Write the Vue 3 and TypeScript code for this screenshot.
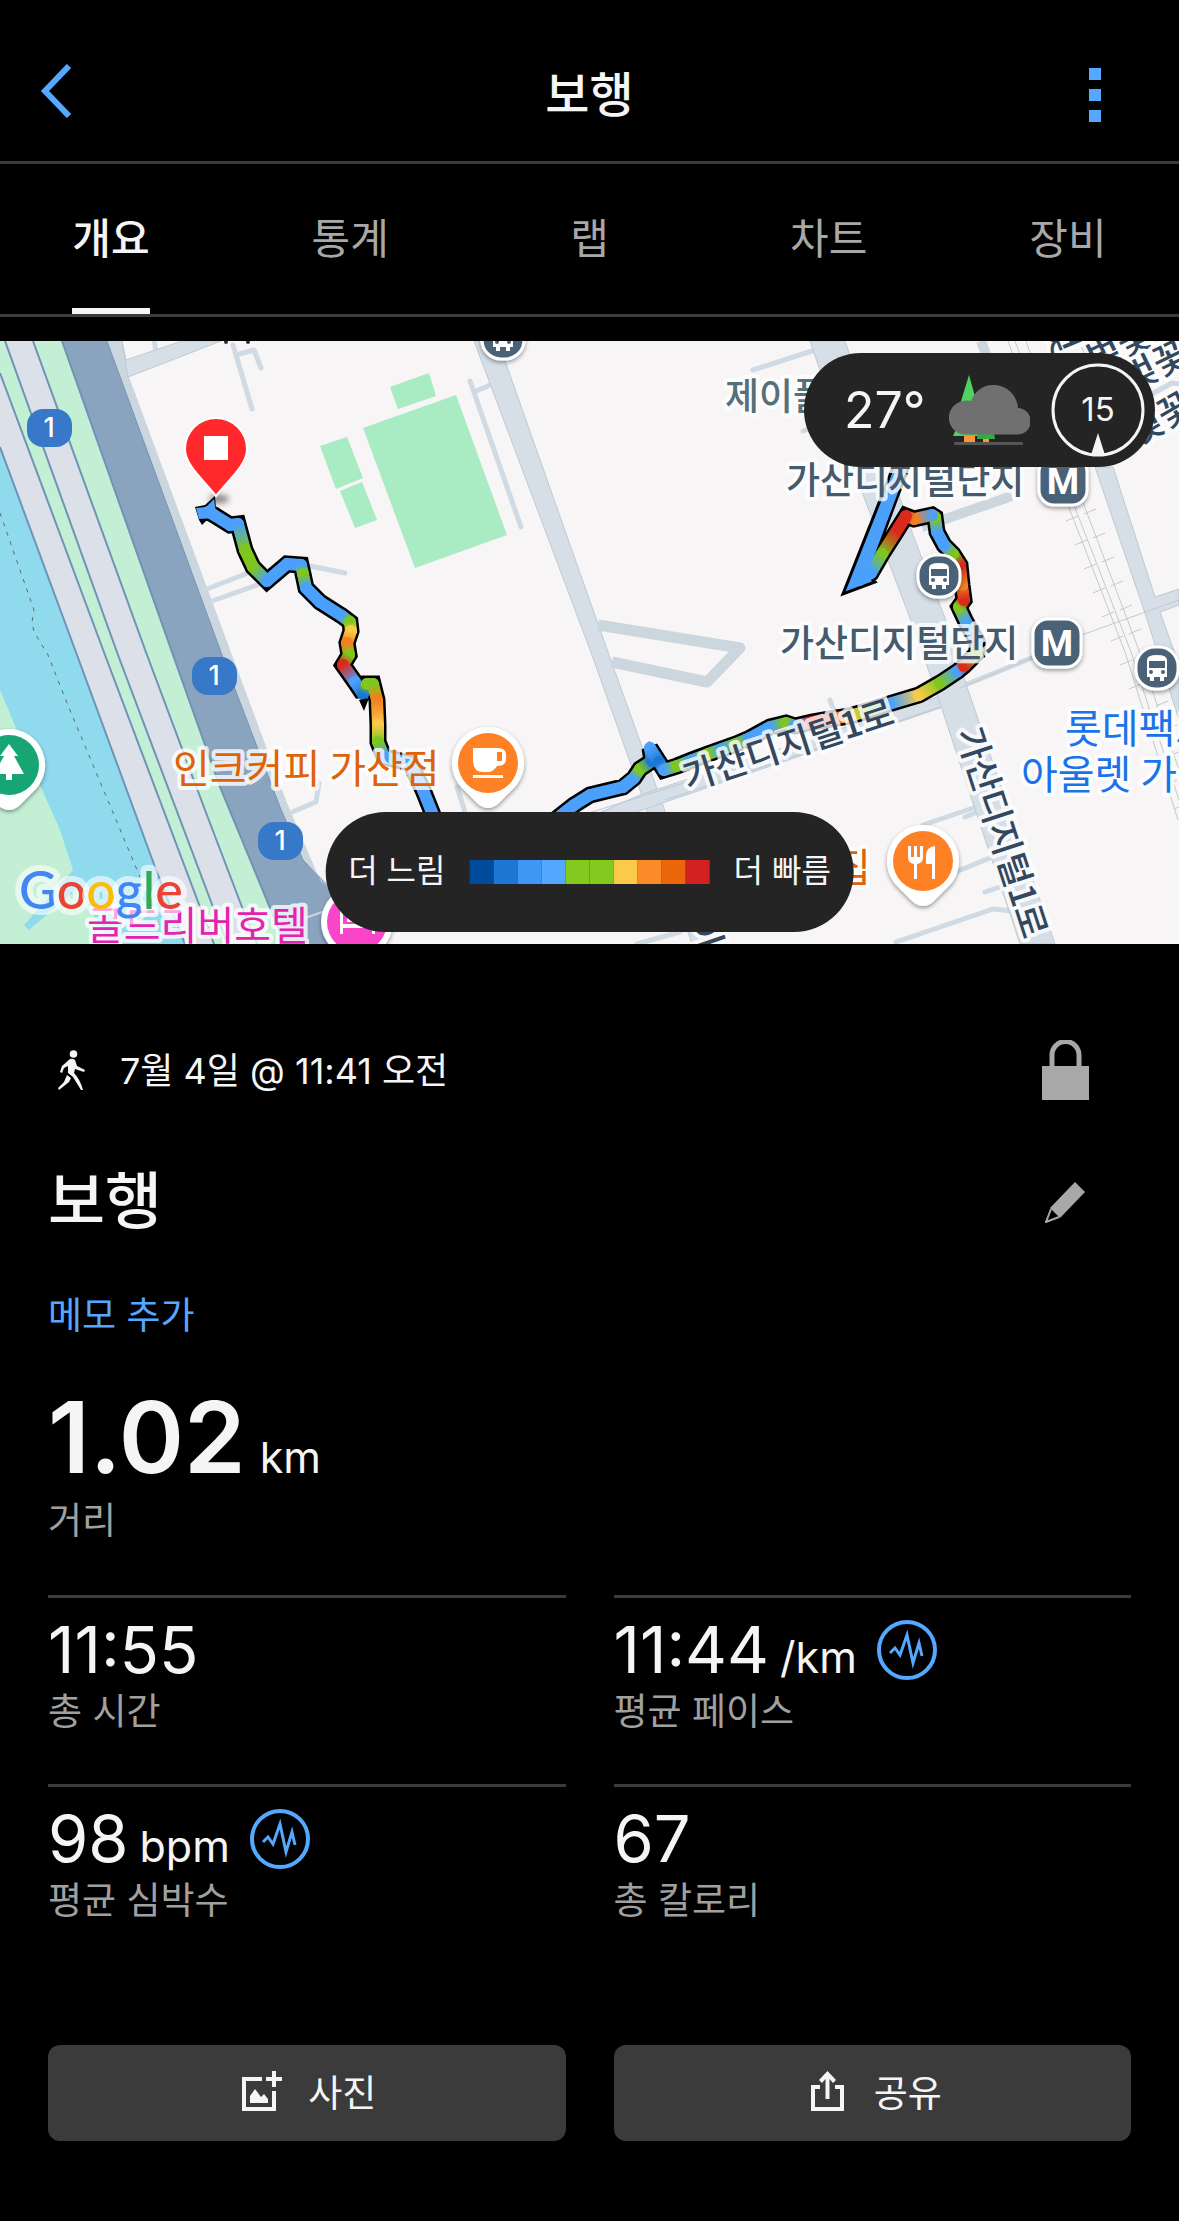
<script setup lang="ts">
import { ref } from 'vue'

interface Tab { id: string; label: string }
interface Stat { value: string; unit?: string; label: string; chart?: boolean }
type TrackPoint = [number, number, string]
interface Segment { id: string; x1: number; y1: number; x2: number; y2: number; from: string; to: string }

const tabs: Tab[] = [
  { id: 'overview', label: '개요' },
  { id: 'stats', label: '통계' },
  { id: 'laps', label: '랩' },
  { id: 'charts', label: '차트' },
  { id: 'gear', label: '장비' },
]
const activeTab = ref('overview')

const stats: Stat[] = [
  { value: '11:55', label: '총 시간' },
  { value: '11:44', unit: '/km', label: '평균 페이스', chart: true },
  { value: '98', unit: 'bpm', label: '평균 심박수', chart: true },
  { value: '67', label: '총 칼로리' },
]

const paceScale = ['#004a9c', '#1c76d3', '#3e97f5', '#55a8ff', '#83c91e', '#83c91e', '#fbca4b', '#fb8b27', '#ea670c', '#d32121']

const B = '#4aa0fa'
const D = '#1c76d3'
const G = '#7fc61e'
const Y = '#fbc94a'
const O = '#f08020'
const R = '#d92a1c'

const westTrack: TrackPoint[] = [
  [208, 512, B], [214, 515, B], [230, 525, B], [238, 524, B], [245, 550, G], [253, 567, G],
  [267, 581, B], [287, 564, B], [301, 565, B], [303, 574, G], [306, 588, B], [320, 602, B], [342, 616, B],
  [350, 622, G], [351, 631, Y], [347, 643, O], [349, 655, G], [343, 665, R], [355, 682, B], [363, 694, D],
  [367, 684, G], [373, 684, G], [377, 700, O], [378, 725, Y], [378, 742, G], [384, 757, B], [410, 763, B],
  [423, 790, B], [433, 815, B], [450, 850, B],
]
const eastTrack: TrackPoint[] = [
  [555, 820, B], [574, 805, B], [590, 795, B], [623, 787, B], [634, 778, B], [640, 769, G], [652, 761, D],
  [650, 748, B], [659, 762, D], [664, 770, B], [677, 766, G], [692, 760, B], [708, 754, G], [722, 749, B],
  [736, 744, G], [750, 738, B], [770, 727, B], [786, 723, G], [795, 726, B], [812, 722, R], [830, 719, R],
  [850, 716, Y], [870, 710, G], [892, 703, B], [919, 695, Y], [940, 683, G], [958, 671, B], [964, 666, R],
  [977, 653, G], [977, 641, B], [966, 622, B], [959, 607, G], [964, 600, R], [962, 585, O], [960, 565, R],
  [953, 554, G], [944, 545, B], [937, 532, B], [935, 517, G], [932, 515, B], [914, 519, O], [906, 516, R],
  [896, 532, R], [882, 554, G], [871, 573, B], [859, 580, B], [870, 550, B], [900, 470, B], [910, 445, B],
]

const segmentsOf = (points: TrackPoint[], prefix: string): Segment[] =>
  points.slice(1).map((p, i) => {
    const q = points[i]
    return { id: `${prefix}-${i}`, x1: q[0], y1: q[1], x2: p[0], y2: p[1], from: q[2], to: p[2] }
  })
const outlineOf = (points: TrackPoint[]) => points.map((p) => `${p[0]},${p[1]}`).join(' ')

const segments = [...segmentsOf(westTrack, 'w'), ...segmentsOf(eastTrack, 'e')]
const outlines = [outlineOf(westTrack), outlineOf(eastTrack)]

const shields = [[50, 428], [215, 676], [281, 841]]
const busStops = [[503, 338], [939, 576], [1157, 668]]
const metros = [[1063, 481], [1057, 643]]
const railTicks = Array.from({ length: 16 }, (_, i) => [1066 + i * 9, 515 + i * 24])
</script>

<template>
  <div class="screen">
    <header class="topbar">
      <button class="icon-button back" type="button" aria-label="뒤로">
        <svg width="32" height="54" viewBox="0 0 32 54"><path d="M29 2 5 27 29 52" fill="none" stroke="currentColor" stroke-width="6" /></svg>
      </button>
      <h1>보행</h1>
      <button class="icon-button more" type="button" aria-label="더 보기">
        <svg width="12" height="54" viewBox="0 0 12 54" fill="currentColor"><path d="M0 0h12v12H0zM0 21h12v12H0zM0 42h12v12H0z" /></svg>
      </button>
    </header>

    <nav class="tabs">
      <button
        v-for="tab in tabs"
        :key="tab.id"
        type="button"
        class="tab"
        :class="{ active: tab.id === activeTab }"
        @click="activeTab = tab.id"
      >{{ tab.label }}</button>
    </nav>

    <section class="map">
      <svg class="map-canvas" viewBox="0 341 1179 603">
        <defs>
          <linearGradient
            v-for="s in segments" :id="s.id" :key="s.id" gradientUnits="userSpaceOnUse"
            :x1="s.x1" :y1="s.y1" :x2="s.x2" :y2="s.y2"
          >
            <stop offset="0" :stop-color="s.from" />
            <stop offset="1" :stop-color="s.to" />
          </linearGradient>
          <filter id="shade" x="-30%" y="-30%" width="160%" height="170%">
            <feDropShadow dx="0" dy="2" stdDeviation="2" flood-color="#000" flood-opacity="0.4" />
          </filter>
          <filter id="soft" x="-50%" y="-100%" width="200%" height="300%"><feGaussianBlur stdDeviation="3" /></filter>
        </defs>

        <rect y="341" width="1179" height="603" fill="#f7f5f6" />

        <!-- river and expressway -->
        <path d="M0 341V944H185L155 867 77 655 0 447z" fill="#90daee" />
        <path d="M0 690 16 728 40 785 60 830 73 870 24 925 29 930 78 888 110 944H0z" fill="#c3f0d5" />
        <path d="M0 341H107L222 655 280 807 303 860 335 890V944H185L155 867 77 655 0 447z" fill="#dce0e8" />
        <path d="M0 341H5L118 655 213 907 228 944H212L200 907 105 655 0 373z" fill="#c3f0d5" />
        <path d="M33 341H62L173 655 220 787 268 903 285 944H257L242 907 205 810 147 655z" fill="#c3f0d5" />
        <path d="M62 341H107L222 655 280 807 303 860 335 894V944H285L268 903 220 787 173 655z" fill="#8aa4c0" />
        <path d="M107 341H122L129 377 232 655 287 803 320 880 336 895 303 860 280 807 222 655z" fill="#ccd6de" />
        <g fill="none" stroke="#6f93b6" stroke-width="2">
          <path d="M0 447 77 655 155 867 185 944M0 373 105 655 200 907 214 944M5 341 118 655 213 907 228 944" />
          <path d="M33 341 147 655 205 810 242 907 257 944M62 341 173 655 220 787 268 903 285 944" />
          <path d="M107 341 222 655 280 807 303 860 336 895" stroke-width="1" />
        </g>
        <path d="M305 918 328 910" stroke="#ccd6de" stroke-width="2" />
        <path d="M0 513 34 610 32 622 34 632 48 655 67 703 140 877 165 940" fill="none" stroke="#666" stroke-width="1" stroke-dasharray="4 6" />

        <!-- parks -->
        <g fill="#a9ebc3">
          <path d="M390 387 429 373 436 396 398 409z" />
          <path d="M363 428 456 395 507 535 415 568z" />
          <path d="M320 446 347 437 363 478 336 489z" />
          <path d="M340 491 362 482 377 520 355 528z" />
        </g>

        <!-- side streets -->
        <g fill="none" stroke="#cfdae4" stroke-width="5" stroke-linecap="round" stroke-linejoin="round">
          <path d="M154 341 156 351M233 345 236 355 252 409M236 355 254 350 261 368" />
          <path d="M207 589 248 573M212 601 257 585M310 566 345 573" />
          <path d="M470 381 521 527M476 391 495 383M753 370 812 351M803 431 820 425" />
          <path d="M457 787 465 812M292 812 316 802 319 783M830 700 838 722M846 712 856 735" />
          <path d="M923 825 973 808M965 817 975 813M958 871 990 858M985 892 1000 887M896 942 993 909 1012 911" />
          <path d="M637 944 680 932M965 685 1034 657M1150 395 1172 383 1179 384" />
        </g>

        <!-- main streets -->
        <g stroke="#bccad2" stroke-width="1">
          <path d="M122 341 126 360 182 341H221L128 377z" fill="#d6dfe7" />
          <path d="M474 341H498L609 655 655 783 712 944H692L640 790 592 655z" fill="#d6dfe7" />
          <path d="M555 832 640 795 940 696 946 706 560 838z" fill="#d6dfe7" />
          <path d="M810 341H845L913 535 945 618 967 687 1055 944H1020L973 803 940 703 910 618 862 492z" fill="#d6dfe7" />
          <path d="M1095 467H1113L1155 597 1179 589V605L1160 612 1179 665V720L1145 613z" fill="#d6dfe7" />
          <path d="M560 822 700 778M665 800 940 707" fill="none" />
        </g>
        <path d="M598 625 740 648 707 682 612 662" fill="none" stroke="#ccd6de" stroke-width="11" stroke-linejoin="round" />
        <path d="M922 527 1012 496M981 341 988 360M1083 352 1102 343" fill="none" stroke="#ccd6de" stroke-width="10" />

        <!-- railway -->
        <g fill="none" stroke="#c4c9ce" stroke-width="1">
          <path d="M1008 341 1068 505 1125 652 1178 820M1015 341 1074 505 1131 652 1179 800M1026 341 1084 505 1137 645 1179 770" />
          <path d="M1076 637 1179 600M960 688 1034 657" />
          <path v-for="t in railTicks" :key="t[0]" :d="`M${t[0]} ${t[1] + 6}l12-5m6 -2l12-5`" />
        </g>

        <!-- recorded track -->
        <ellipse cx="219" cy="499" rx="10" ry="4" fill="#000" opacity="0.5" filter="url(#soft)" />
        <polyline v-for="(o, i) in outlines" :key="i" :points="o" fill="none" stroke="#000" stroke-width="17" stroke-linejoin="miter" stroke-miterlimit="2" />
        <path d="M195 507 205 505 215 496 217 520 206 521 202 525 199 520z" fill="#000" />
        <path d="M892 470 843 594 875 582 865 573 908 466z" :fill="B" stroke="#000" stroke-width="3" />
        <path d="M649 741 645 760 667 765z" fill="#000" />
        <line
          v-for="s in segments" :key="`line-${s.id}`" :x1="s.x1" :y1="s.y1" :x2="s.x2" :y2="s.y2"
          :stroke="`url(#${s.id})`" stroke-width="12" stroke-linecap="round"
        />
        <path d="M196 508 206 507 214 499 217 518 199 519z" :fill="B" />
        <path d="M359 700 369 698 364 711z" fill="#000" />

        <!-- route shields -->
        <g v-for="s in shields" :key="s[1]">
          <rect :x="s[0] - 23" :y="s[1] - 19" width="45" height="38" rx="16" fill="#3878c8" />
          <text :x="s[0] - 1" :y="s[1] + 9" class="shield">1</text>
        </g>

        <!-- place labels -->
        <g class="label slate">
          <text x="725" y="410" fill="#56707a">제이플</text>
          <text x="786" y="494">가산디지털단지</text>
          <text x="780" y="657">가산디지털단지</text>
        </g>
        <g class="label street">
          <text transform="translate(688 791) rotate(-18)">가산디지털1로</text>
          <text transform="translate(956 732) rotate(72)">가산디지털1로</text>
          <text transform="translate(1095 372) rotate(-26)">벚꽃로</text>
          <text transform="translate(1131 392) rotate(-26)">벚꽃로</text>
          <text transform="translate(1138 446) rotate(-30)">벚꽃로</text>
          <text transform="translate(1043 326) rotate(68)">벚</text>
          <text transform="translate(688 921) rotate(71)">이</text>
        </g>
        <g class="poi">
          <text x="173" y="783" fill="#dd6208">인크커피 가산점</text>
          <text x="834" y="882" fill="#dd6208">집</text>
          <text x="1065" y="743" fill="#1a73e8">롯데팩토리</text>
          <text x="1021" y="789" fill="#1a73e8">아울렛 가산점</text>
          <text x="87" y="940" fill="#e523b0">골드리버호텔</text>
        </g>

        <!-- transit markers -->
        <g v-for="b in busStops" :key="b[0]" :transform="`translate(${b[0]} ${b[1]})`">
          <rect x="-21" y="-21" width="42" height="42" rx="19" fill="#4a6278" stroke="#fff" stroke-width="3" filter="url(#shade)" />
          <path d="M-10-8q0-5 10-5t10 5V9H7v4H3V9H-3v4H-7V9h-3z" fill="#fff" />
          <path d="M-8-7H8V0H-8z" fill="#4a6278" /><circle cx="-6" cy="4" r="2" fill="#4a6278" /><circle cx="6" cy="4" r="2" fill="#4a6278" />
        </g>
        <g v-for="m in metros" :key="m[1]">
          <rect :x="m[0] - 24" :y="m[1] - 24" width="48" height="48" rx="15" fill="#4a6278" stroke="#fff" stroke-width="3" filter="url(#shade)" />
          <text :x="m[0]" :y="m[1] + 13" class="metro">M</text>
        </g>

        <!-- place pins -->
        <g transform="translate(488 763)">
          <path d="M0-36a36 36 0 0 1 26 61L10 41Q0 49-10 41L-26 25A36 36 0 0 1 0-36z" fill="#fff" filter="url(#shade)" />
          <circle r="30" fill="#ff8126" />
          <path d="M-15-15H10q8 0 8 7v4q0 7-9 7Q5 9 0 9H-5Q-15 9-15-3zM9-11V-2h5v-9zM-15 12H15v3H-15z" fill="#fff" fill-rule="evenodd" />
        </g>
        <g transform="translate(923 861)">
          <path d="M0-36a36 36 0 0 1 26 61L10 41Q0 49-10 41L-26 25A36 36 0 0 1 0-36z" fill="#fff" filter="url(#shade)" />
          <circle r="30" fill="#ff8126" />
          <path d="M-15-15h3v11h3v-11h3v11h3v-11h3v11q0 6-6 7v15h-3V3q-6-1-6-7zM12-15v33H9V3H3V-5Q3-14 12-15z" fill="#fff" />
        </g>
        <g transform="translate(9 765)">
          <path d="M0-36a36 36 0 0 1 26 61L10 41Q0 49-10 41L-26 25A36 36 0 0 1 0-36z" fill="#fff" filter="url(#shade)" />
          <circle r="30" fill="#17a673" />
          <path d="M0-21 9-9H5L15 9H3v6H-3V9H-15L-5-9H-9z" fill="#fff" />
        </g>
        <g transform="translate(357 922)">
          <circle r="36" fill="#fff" filter="url(#shade)" /><circle r="30" fill="#fb45c8" />
          <path d="M-17-11h3V2H15V-6h3V12H15V6H-14v6h-3zM-10-8H-2V0h-8z" fill="#fff" />
        </g>

        <!-- finish pin -->
        <path d="M216 496C205 481 185 466 185 449a31 31 0 0 1 62 0C247 466 227 481 216 496z" fill="#ff282b" stroke="#fff" stroke-width="2" />
        <rect x="204" y="436" width="24" height="24" fill="#fff" />
        <circle cx="226" cy="342" r="2" fill="#27324a" /><circle cx="248" cy="342" r="2" fill="#27324a" />

        <text x="19" y="909" class="google"><tspan fill="#4285f4">G</tspan><tspan fill="#ea4335">o</tspan><tspan fill="#fbbc05">o</tspan><tspan fill="#4285f4">g</tspan><tspan fill="#34a853">l</tspan><tspan fill="#ea4335">e</tspan></text>
      </svg>

      <div class="weather">
        <span class="temperature">27°</span>
        <svg width="84" height="70" viewBox="0 0 84 70">
          <path d="M23 0 36 46H9z" fill="#4fd264" /><path d="M11 52H40V61H7z" fill="#4fd264" />
          <path d="M32 58H48L49 64H31z" fill="#2fae45" />
          <path d="M18 61H29V67H18zM37 64H43V67H37z" fill="#ff9634" />
          <rect x="8" y="67" width="69" height="3" rx="1" fill="#555" />
          <path d="M17 59.500A17 17 0 0 1 17 26Q21 25 25 26C29 16 37 10 47 10C61 10 71 20 72 33A13 13 0 0 1 71 59.500z" fill="#707070" />
        </svg>
        <svg class="wind" width="94" height="94" viewBox="0 0 94 94">
          <circle cx="47" cy="47" r="45" fill="none" stroke="#f5f5f5" stroke-width="3" />
          <path d="M47 70 54 92Q47 94 40 92z" fill="#f5f5f5" />
          <text x="47" y="58">15</text>
        </svg>
      </div>

      <div class="legend">
        <span>더 느림</span>
        <div class="scale"><i v-for="(c, i) in paceScale" :key="i" :style="{ background: c }"></i></div>
        <span>더 빠름</span>
      </div>
    </section>

    <main class="details">
      <div class="row">
        <svg class="walker" width="28" height="40" viewBox="0 0 28 40" fill="#f5f5f5">
          <circle cx="15.500" cy="4" r="3.800" />
          <path d="M12 9Q15 8 17 10L19 16 27 20 26 22 17 19 16 23Q22 29 25 40H23L15 27 10 23 10 16 6 18 4 23 2 22 4 16z" />
          <path d="M9 25 13 28 11 32 1 40 0 38 6 32z" />
        </svg>
        <time class="date">7월 4일 @ 11:41 오전</time>
        <button class="icon-button action" type="button" aria-label="공개 범위">
          <svg width="47" height="60" viewBox="0 0 47 60"><path d="M10 28V15a13 13 0 0 1 27 0V28" fill="none" stroke="#a8a8a8" stroke-width="5" /><path d="M0 26H47V60H0z" fill="#a8a8a8" /></svg>
        </button>
      </div>
      <div class="row">
        <h2>보행</h2>
        <button class="icon-button action" type="button" aria-label="이름 편집">
          <svg width="40" height="41" viewBox="0 0 40 41"><path d="M30 0 40 10 15 36 5 26z" fill="#a8a8a8" /><path d="M6 27 1 40 14 35" fill="none" stroke="#a8a8a8" stroke-width="2" /></svg>
        </button>
      </div>
      <a class="memo" href="#memo">메모 추가</a>

      <div class="distance"><strong>1.02</strong><span class="unit">km</span></div>
      <div class="caption">거리</div>

      <div class="stats">
        <div v-for="s in stats" :key="s.label" class="stat">
          <div class="value">
            <span class="number">{{ s.value }}</span>
            <span v-if="s.unit" class="unit">{{ s.unit }}</span>
            <button v-if="s.chart" class="icon-button chart" type="button" :aria-label="`${s.label} 차트`">
              <svg width="60" height="60" viewBox="0 0 60 60" fill="none" stroke="currentColor">
                <circle cx="30" cy="30" r="28" stroke-width="4" />
                <path d="M13 33 18 28 23 35 30 15 36 43 42 23 45 36" stroke-width="3" stroke-miterlimit="8" />
              </svg>
            </button>
          </div>
          <div class="caption">{{ s.label }}</div>
        </div>
      </div>

      <div class="buttons">
        <button type="button">
          <svg width="40" height="40" viewBox="0 0 40 40" fill="#f5f5f5">
            <path d="M0 6H20V10H4V36H30V20H34V40H0z" /><path d="M30 0H34V6H40V10H34V16H30V10H24V6H30z" /><path d="M8 32V25L13 18 19 26 22 23 26 28V32z" />
          </svg>
          <span>사진</span>
        </button>
        <button type="button">
          <svg width="40" height="40" viewBox="0 0 40 40" fill="#f5f5f5">
            <path d="M3 14H12V18H7V36H32V18H27V14H36V40H3z" /><path d="M19.500 0 28 9 25 12 21.500 8V28H17.500V8L14 12 11 9z" />
          </svg>
          <span>공유</span>
        </button>
      </div>
    </main>
  </div>
</template>

<style>
body {
  background: #000;
}
</style>

<style scoped>
.screen {
  box-sizing: border-box;
  min-height: 100vh;
  background: #000;
  color: #f5f5f5;
  font-family: Inter, "Noto Sans CJK KR", sans-serif;
  font-size: 36px;
}
button {
  margin: 0;
  padding: 0;
  border: 0;
  background: none;
  color: inherit;
  font: inherit;
  cursor: pointer;
}
svg {
  display: block;
  flex: none;
}
.icon-button {
  display: flex;
  align-items: center;
  justify-content: center;
  color: #55a8ff;
}
.topbar {
  display: flex;
  align-items: center;
  justify-content: space-between;
  height: 133px;
  padding: 28px 12px 0;
  border-bottom: 3px solid #3b3b3b;
}
.topbar .icon-button {
  width: 88px;
  height: 90px;
}
.topbar .back {
  padding-bottom: 8px;
}
.topbar .more {
  width: 144px;
  margin-left: -56px;
}
h1 {
  margin: 0;
  font-size: 48px;
  font-weight: 500;
  line-height: 72px;
}
.tabs {
  display: flex;
  justify-content: space-between;
  height: 150px;
  padding: 0 72px;
  border-bottom: 3px solid #3b3b3b;
}
.tab {
  width: 78px;
  padding-bottom: 2px;
  border-bottom: 6px solid transparent;
  color: #a8a8a8;
  font-size: 42px;
  white-space: nowrap;
}
.tab.active {
  border-color: #f5f5f5;
  color: #f5f5f5;
  font-weight: 500;
}
.map {
  position: relative;
  margin-top: 24px;
  overflow: hidden;
}
.map-canvas {
  width: 100%;
  height: auto;
}
.label,
.poi {
  font-family: "Noto Sans CJK KR", sans-serif;
  font-size: 36px;
  font-weight: 500;
  paint-order: stroke;
  stroke: rgba(255, 255, 255, 0.8);
  stroke-width: 8px;
  stroke-linejoin: round;
}
.poi {
  font-size: 40px;
  font-weight: 400;
}
.slate {
  fill: #445a6e;
  font-size: 37px;
}
.street {
  fill: #33475e;
}
.shield {
  fill: #fff;
  font-size: 27px;
  font-weight: 500;
  text-anchor: middle;
}
.metro {
  fill: #fff;
  font-family: Roboto, sans-serif;
  font-size: 37px;
  font-weight: 700;
  text-anchor: middle;
}
.google {
  font-family: Lato, sans-serif;
  font-size: 52px;
  font-weight: 500;
  paint-order: stroke;
  stroke: rgba(255, 255, 255, 0.6);
  stroke-width: 12px;
  stroke-linejoin: round;
}
.weather {
  position: absolute;
  top: 12px;
  right: 24px;
  box-sizing: border-box;
  display: flex;
  align-items: center;
  justify-content: space-between;
  width: 351px;
  height: 114px;
  padding: 0 10px 0 40px;
  border-radius: 57px;
  background: #242424;
}
.temperature {
  font-size: 50px;
}
.wind text {
  fill: #f5f5f5;
  font-size: 33px;
  text-anchor: middle;
}
.legend {
  position: absolute;
  bottom: 12px;
  left: 50%;
  display: flex;
  align-items: center;
  gap: 24px;
  height: 120px;
  padding: 0 23px;
  border-radius: 60px;
  background: #242424;
  font-size: 32px;
  line-height: 48px;
  white-space: nowrap;
  transform: translateX(-50%);
}
.legend span {
  padding-bottom: 2px;
}
.scale {
  display: flex;
}
.scale i {
  width: 24px;
  height: 24px;
}
.details {
  padding: 60px 48px 80px;
}
.row {
  display: flex;
  align-items: center;
  height: 132px;
}
.walker {
  margin-left: 10px;
}
.date {
  margin-left: 34px;
  padding-bottom: 4px;
}
.action {
  width: 132px;
  height: 132px;
  margin-left: auto;
}
h2 {
  margin: 0;
  font-size: 62px;
  font-weight: 500;
  line-height: 84px;
}
.memo {
  display: block;
  width: max-content;
  margin-top: 24px;
  color: #55a8ff;
  font-size: 37px;
  line-height: 48px;
  text-decoration: none;
}
.distance {
  display: flex;
  align-items: baseline;
  gap: 14px;
  height: 120px;
  margin-top: 37px;
  line-height: 120px;
}
.distance strong {
  font-size: 99px;
  font-weight: 600;
}
.unit {
  font-size: 43px;
}
.caption {
  color: #a0a0a0;
  font-size: 37px;
  line-height: 48px;
}
.stats {
  display: grid;
  grid-template-columns: 1fr 1fr;
  gap: 48px;
  margin-top: 50px;
}
.stat {
  border-top: 3px solid #3b3b3b;
}
.value {
  display: flex;
  align-items: baseline;
  gap: 11px;
  height: 64px;
  margin: 20px 0 6px;
  line-height: 64px;
}
.number {
  font-size: 65px;
}
.chart {
  align-self: center;
  margin-left: 9px;
}
.buttons {
  display: grid;
  grid-template-columns: 1fr 1fr;
  gap: 48px;
  margin-top: 120px;
}
.buttons button {
  display: flex;
  align-items: center;
  justify-content: center;
  gap: 26px;
  height: 96px;
  padding: 0 0 4px 5px;
  border-radius: 12px;
  background: #3b3b3b;
  font-size: 37px;
}
</style>
